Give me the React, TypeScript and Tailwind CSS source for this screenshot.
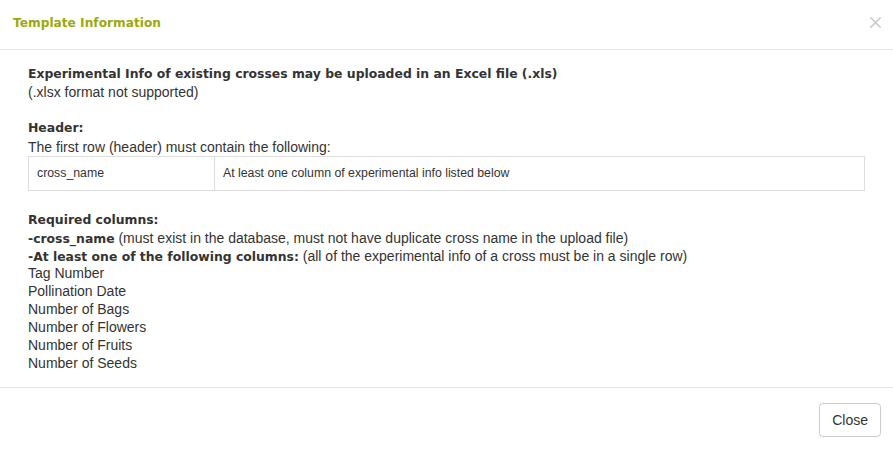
import * as React from 'react';
import { X } from 'lucide-react';

const columns = [
  'Tag Number',
  'Pollination Date',
  'Number of Bags',
  'Number of Flowers',
  'Number of Fruits',
  'Number of Seeds',
];

export default function App() {
  return (
    <div className="w-[893px] h-[451px] bg-white text-[#333] font-['Liberation_Sans',Arial,sans-serif] text-[14px]">
      {/* header */}
      <div className="h-[50px] border-b border-[#e5e5e5] flex items-center justify-between pl-[13px] pr-[8px]">
        <h4 className="font-['DejaVu_Sans',sans-serif] font-bold text-[12.2px] text-[#9aaa0a] pb-[3px]">
          Template Information
        </h4>
        <button className="text-[#c4c4c4] pb-[5px]">
          <X size={19} strokeWidth={1.8} />
        </button>
      </div>

      {/* body */}
      <div className="h-[337px] px-[28px] pt-[15px] leading-[18.2px]">
        <div className="font-['DejaVu_Sans',sans-serif] font-bold text-[12.4px]">
          Experimental Info of existing crosses may be uploaded in an Excel file (.xls)
        </div>
        <div>(.xlsx format not supported)</div>

        <div className="mt-[18px] font-['DejaVu_Sans',sans-serif] font-bold text-[12.4px]">Header:</div>
        <div>The first row (header) must contain the following:</div>
        <table className="w-[837px] border-collapse border border-[#ddd] text-[12.3px]">
          <tbody>
            <tr className="h-[34px]">
              <td className="w-[186px] border border-[#ddd] px-[8px]">cross_name</td>
              <td className="border border-[#ddd] px-[8px]">At least one column of experimental info listed below</td>
            </tr>
          </tbody>
        </table>

        <div className="mt-[20px] font-['DejaVu_Sans',sans-serif] font-bold text-[12.4px]">Required columns:</div>
        <div>
          <b className="font-['DejaVu_Sans',sans-serif] text-[12.4px] leading-none">-cross_name</b> (must exist in the database,
          must not have duplicate cross name in the upload file)
        </div>
        <div>
          <b className="font-['DejaVu_Sans',sans-serif] text-[12.4px] leading-none">-At least one of the following columns:</b>{' '}
          (all of the experimental info of a cross must be in a single row)
        </div>
        <div className="-mt-px leading-[18px]">
          {columns.map(c => (
            <div key={c}>{c}</div>
          ))}
        </div>
      </div>

      {/* footer */}
      <div className="border-t border-[#e5e5e5] flex justify-end pt-[15px] pr-[12px]">
        <button className="h-[34px] px-[12px] rounded-[4px] border border-[#ccc] bg-white text-[14px] text-[#333]">
          Close
        </button>
      </div>
    </div>
  );
}
